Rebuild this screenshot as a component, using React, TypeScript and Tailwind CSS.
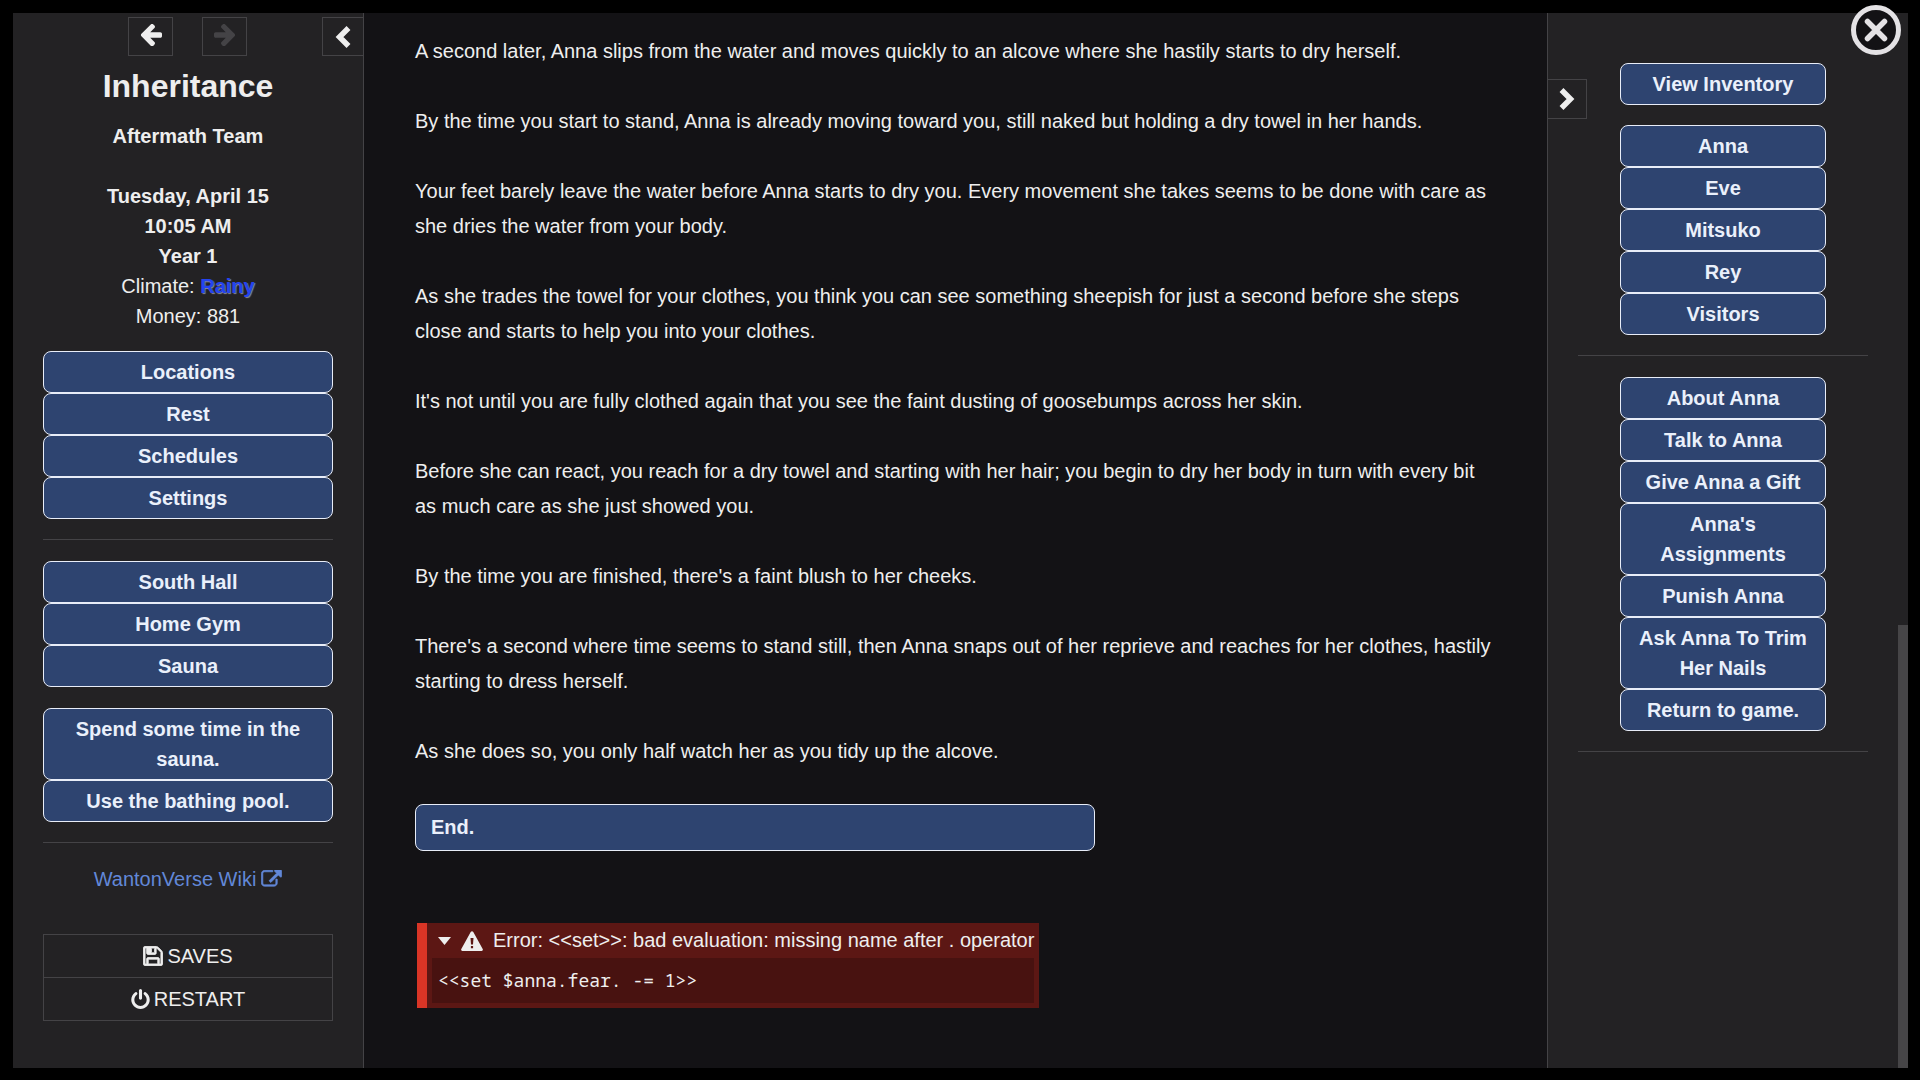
import type { ReactNode } from "react";

const statusLines = ["Tuesday, April 15", "10:05 AM", "Year 1"];

const mainActions = ["Locations", "Rest", "Schedules", "Settings"];
const rooms = ["South Hall", "Home Gym", "Sauna"];
const roomActions = ["Spend some time in the sauna.", "Use the bathing pool."];

const characters = ["Anna", "Eve", "Mitsuko", "Rey", "Visitors"];
const annaActions = [
  "About Anna",
  "Talk to Anna",
  "Give Anna a Gift",
  "Anna's Assignments",
  "Punish Anna",
  "Ask Anna To Trim Her Nails",
  "Return to game.",
];

const passage = [
  "A second later, Anna slips from the water and moves quickly to an alcove where she hastily starts to dry herself.",
  "By the time you start to stand, Anna is already moving toward you, still naked but holding a dry towel in her hands.",
  "Your feet barely leave the water before Anna starts to dry you. Every movement she takes seems to be done with care as she dries the water from your body.",
  "As she trades the towel for your clothes, you think you can see something sheepish for just a second before she steps close and starts to help you into your clothes.",
  "It's not until you are fully clothed again that you see the faint dusting of goosebumps across her skin.",
  "Before she can react, you reach for a dry towel and starting with her hair; you begin to dry her body in turn with every bit as much care as she just showed you.",
  "By the time you are finished, there's a faint blush to her cheeks.",
  "There's a second where time seems to stand still, then Anna snaps out of her reprieve and reaches for her clothes, hastily starting to dress herself.",
  "As she does so, you only half watch her as you tidy up the alcove.",
];

function ArrowIcon({ flip = false }: { flip?: boolean }) {
  return (
    <svg
      viewBox="0 -64 1536 1536"
      className={flip ? "size-[22px] -scale-x-100" : "size-[22px]"}
      fill="currentColor"
    >
      <path d="M1536 640v128q0 53-32.500 90.500t-84.500 37.500h-704l293 294q38 36 38 90t-38 90l-75 76q-37 37-90 37-52 0-91-37l-651-652q-37-37-37-90 0-52 37-91l651-650q38-38 91-38 52 0 90 38l75 74q38 38 38 91t-38 91l-293 293h704q52 0 84.500 37.500t32.500 90.500z" />
    </svg>
  );
}

function ChevronIcon({ flip = false }: { flip?: boolean }) {
  return (
    <svg
      viewBox="0 0 16 22"
      className={flip ? "h-[22px] w-4 -scale-x-100" : "h-[22px] w-4"}
      fill="none"
      stroke="currentColor"
      strokeWidth="5.5"
    >
      <path d="M13.500 2 4.500 11l9 9" />
    </svg>
  );
}

function SaveIcon() {
  return (
    <svg
      viewBox="-40 -40 1616 1616"
      className="size-5"
      fill="currentColor"
      stroke="currentColor"
      strokeWidth="70"
    >
      <path d="M384 1408h768v-384H384v384zm896 0h128V512q0-14-10-38.500t-20-34.500l-281-281q-10-10-34-20t-39-10v416q0 40-28 68t-68 28H352q-40 0-68-28t-28-68V128H128v1280h128V992q0-40 28-68t68-28h832q40 0 68 28t28 68v416zM896 480V160q0-13-9.500-22.500T864 128H672q-13 0-22.500 9.500T640 160v320q0 13 9.500 22.500T672 512h192q13 0 22.500-9.500T896 480zm640 32v928q0 40-28 68t-68 28H96q-40 0-68-28t-28-68V96q0-40 28-68T96 0h928q40 0 88 20t76 48l280 280q28 28 48 76t20 88z" />
    </svg>
  );
}

function PowerIcon() {
  return (
    <svg viewBox="0 0 1536 1664" className="h-5 w-[19px]" fill="currentColor">
      <path d="M1536 896q0 156-61 298t-164 245-245 164-298 61-298-61-245-164-164-245-61-298q0-182 80.500-343t226.500-270q43-32 95.500-25t83.500 50q32 42 24.500 94.500T461 487q-98 74-151.500 181T256 896q0 104 40.500 198.500T406 1258t163.500 109.500T768 1408t198.500-40.500T1130 1258t109.500-163.500T1280 896q0-121-53.500-228T1075 487q-42-32-49.500-84.500T1050 308q31-43 84-50t95 25q146 109 226.500 270t80.500 343zM896 128v640q0 52-38 90t-90 38-90-38-38-90V128q0-52 38-90t90-38 90 38 38 90z" />
    </svg>
  );
}

function ExternalLinkIcon() {
  return (
    <svg
      viewBox="-30 -30 1852 1596"
      className="h-[18px] w-[21px]"
      fill="currentColor"
      stroke="currentColor"
      strokeWidth="60"
    >
      <path d="M1408 800v320q0 119-84.500 203.500T1120 1408H288q-119 0-203.500-84.500T0 1120V288Q0 169 84.500 84.500T288 0h704q14 0 23 9t9 23v64q0 14-9 23t-23 9H288q-66 0-113 47t-47 113v832q0 66 47 113t113 47h832q66 0 113-47t47-113V800q0-14 9-23t23-9h64q14 0 23 9t9 23zm384-768v512q0 26-19 45t-45 19-45-19l-176-176-652 652q-10 10-23 10t-23-10L695 951q-10-10-10-23t10-23l652-652-176-176q-19-19-19-45t19-45 45-19h512q26 0 45 19t19 45z" />
    </svg>
  );
}

function WarningIcon() {
  return (
    <svg viewBox="0 0 22 20" className="h-5 w-[22px]" fill="currentColor">
      <path
        fillRule="evenodd"
        d="M9.700 1q1.300-1.500 2.600 0l9.400 17q.7 1.700-1 2H1.300q-1.700-.3-1-2zM9.500 7l.5 6.500h2L12.500 7zM9.900 15v2.300h2.200V15z"
      />
    </svg>
  );
}

function ActionButton({ children }: { children: ReactNode }) {
  return (
    <button
      type="button"
      className="block w-full rounded-lg border border-[#e8edf8] bg-[#2e4470] px-[15px] py-[5px] text-center font-bold text-[#eaf0fb] hover:bg-[#3b5690]"
    >
      {children}
    </button>
  );
}

function ActionGroup({ items }: { items: string[] }) {
  return (
    <div>
      {items.map((item) => (
        <ActionButton key={item}>{item}</ActionButton>
      ))}
    </div>
  );
}

function Divider() {
  return <hr className="mt-5 mb-[21px] border-t border-[#444346]" />;
}

function LeftSidebar() {
  return (
    <aside className="w-[351px] shrink-0 border-r border-[#444346] bg-[#232224] pt-1 text-center leading-[30px]">
      <div className="flex justify-end">
        <div className="mr-[75px] flex gap-[29px]">
          <button
            type="button"
            aria-label="Go back"
            className="flex h-[39px] w-[45px] items-center justify-center border border-[#444346] pb-1"
          >
            <ArrowIcon />
          </button>
          <button
            type="button"
            aria-label="Go forward"
            disabled
            className="flex h-[39px] w-[45px] items-center justify-center border border-[#444346] pb-1 text-[#444346]"
          >
            <ArrowIcon flip />
          </button>
        </div>
        <button
          type="button"
          aria-label="Hide sidebar"
          className="flex h-[39px] w-[41px] items-center justify-center border border-r-0 border-[#444346]"
        >
          <ChevronIcon />
        </button>
      </div>

      <div className="px-[30px]">
        <h1 className="mt-2 text-[32px] leading-[44px] font-bold">Inheritance</h1>
        <p className="mt-[13px] font-bold">Aftermath Team</p>
        <div className="mt-[30px] mb-5">
          {statusLines.map((line) => (
            <p key={line} className="font-bold">
              {line}
            </p>
          ))}
          <p>
            Climate:{" "}
            <span className="font-bold text-[#2444f0] [text-shadow:1px_1px_1px_#8a8a9c]">
              Rainy
            </span>
          </p>
          <p>Money: 881</p>
        </div>

        <ActionGroup items={mainActions} />
        <Divider />
        <ActionGroup items={rooms} />
        <div className="mt-[21px]">
          <ActionGroup items={roomActions} />
        </div>
        <Divider />

        <a
          href="#wiki"
          className="flex items-center justify-center gap-[5px] text-[#6288d8] hover:underline"
        >
          WantonVerse Wiki
          <ExternalLinkIcon />
        </a>

        <div className="mt-10 divide-y divide-[#444346] border border-[#444346]">
          <button
            type="button"
            className="flex h-[43px] w-full items-center justify-center gap-1"
          >
            <SaveIcon />
            SAVES
          </button>
          <button
            type="button"
            className="flex h-[42px] w-full items-center justify-center gap-1"
          >
            <PowerIcon />
            RESTART
          </button>
        </div>
      </div>
    </aside>
  );
}

function ErrorReport() {
  return (
    <details
      open
      className="mt-[72px] ml-0.5 w-fit border-l-10 border-[#d93526] bg-[#5c1714] p-[5px] pt-0"
    >
      <summary className="flex h-[35px] list-none items-center gap-2.5 pl-[6px]">
        <svg viewBox="0 0 13 8" className="h-2 w-[13px]" fill="currentColor">
          <path d="M0 0h13L6.500 8z" />
        </svg>
        <WarningIcon />
        <span>Error: &lt;&lt;set&gt;&gt;: bad evaluation: missing name after . operator</span>
      </summary>
      <pre className="h-[45px] bg-[#481210] px-[6px] font-['Noto_Sans_Mono','DejaVu_Sans_Mono',monospace] text-lg leading-[45px]">
        {"<<set $anna.fear. -= 1>>"}
      </pre>
    </details>
  );
}

function Passage() {
  return (
    <main className="min-w-0 flex-1 px-[51px] pt-[21px] leading-[35px]">
      <div className="space-y-[35px]">
        {passage.map((text) => (
          <p key={text}>{text}</p>
        ))}
      </div>
      <button
        type="button"
        className="mt-[35px] block w-full max-w-[680px] rounded-lg border border-[#e8edf8] bg-[#2e4470] px-[15px] py-[5px] text-left font-bold text-[#eaf0fb] hover:bg-[#3b5690]"
      >
        End.
      </button>
      <ErrorReport />
    </main>
  );
}

function RightSidebar() {
  return (
    <aside className="flex w-[361px] shrink-0 border-l border-[#444346] bg-[#232224] leading-[30px]">
      <div className="relative flex-1 px-[30px] pt-[50px]">
        <button
          type="button"
          aria-label="Hide character panel"
          className="absolute top-[66px] left-0 flex h-10 w-[39px] items-center justify-center border border-l-0 border-[#444346]"
        >
          <ChevronIcon flip />
        </button>
        <div className="mx-auto w-[206px] space-y-5">
          <ActionGroup items={["View Inventory"]} />
          <ActionGroup items={characters} />
        </div>
        <Divider />
        <div className="mx-auto w-[206px]">
          <ActionGroup items={annaActions} />
        </div>
        <Divider />
      </div>
      {/* scroll thumb for the whole page */}
      <div className="h-[42%] w-2.5 self-end bg-[#464547]" />
    </aside>
  );
}

export default function App() {
  return (
    <div className="relative flex min-h-screen bg-black pt-[13px] pr-3 pb-3 pl-[13px] font-['Liberation_Sans',Arial,sans-serif] text-xl text-[#eeeeee]">
      <div className="flex flex-1 bg-[#131215]">
        <LeftSidebar />
        <Passage />
        <RightSidebar />
      </div>
      <button
        type="button"
        aria-label="Close"
        className="absolute top-[5px] right-[19px] flex size-[50px] items-center justify-center rounded-full border-5 border-[#e4e2e5] bg-[#131215] text-[#e4e2e5]"
      >
        <svg
          viewBox="0 0 24 24"
          className="size-6"
          fill="none"
          stroke="currentColor"
          strokeWidth="5.5"
          strokeLinecap="round"
        >
          <path d="M3.500 3.500l17 17M20.500 3.500l-17 17" />
        </svg>
      </button>
    </div>
  );
}
